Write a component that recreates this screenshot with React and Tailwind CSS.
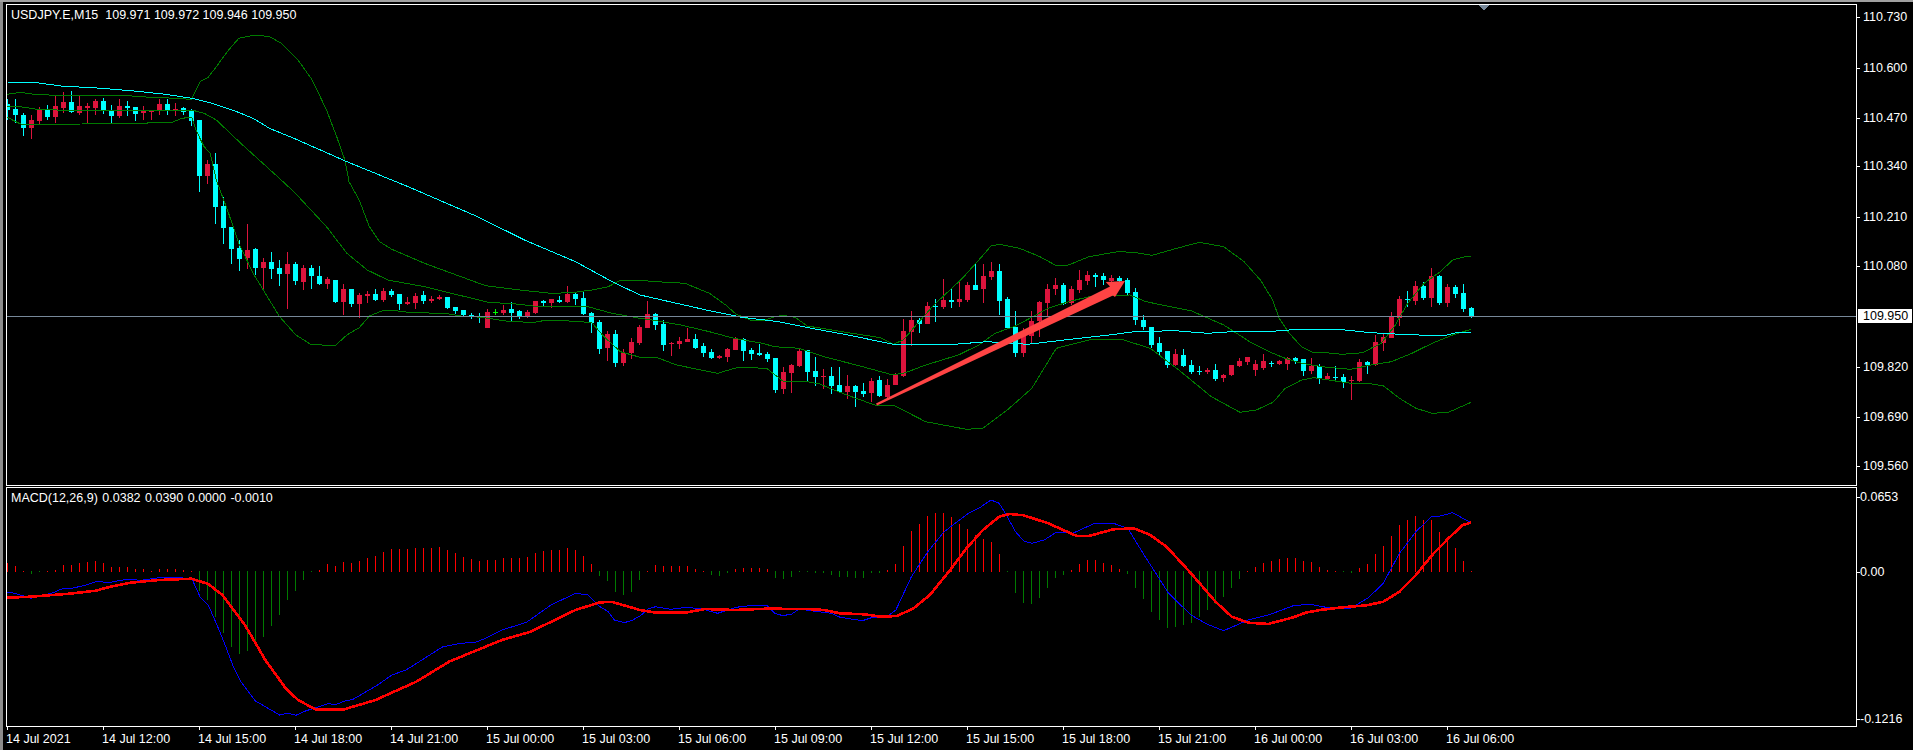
// MT4 style chart: USDJPY.E M15 with bollinger bands, MA and MACD.
// Numbers below are read off the screenshot: x is stretched 2.45 times and y 3 times.
const CANDLES = [
  [0,312,330,298,360],[0,327,345,297,368],[0,345,383,340,408],[1,360,383,345,417],[1,328,363,322,372],[0,327,352,315,360],
  [1,318,351,288,368],[1,306,323,276,340],[0,306,336,273,338],[1,318,340,287,345],[1,318,323,310,368],[1,303,324,297,345],
  [0,303,333,294,342],[0,330,348,315,372],[1,318,348,297,354],[0,318,323,303,348],[0,321,342,320,363],[1,333,339,318,360],
  [1,330,335,330,360],[1,312,333,297,345],[0,312,333,297,345],[1,327,332,309,348],[0,324,336,321,345],[0,330,362,327,378],
  [0,360,528,360,576],[1,492,528,480,552],[0,492,621,459,672],[0,618,684,591,732],[0,681,747,681,792],[0,744,777,720,813],
  [1,750,774,672,807],[0,747,804,743,825],
  [1,786,804,774,870],[0,786,807,756,837],[0,804,822,780,858],[1,792,822,756,927],[0,792,843,786,855],[1,804,846,795,870],
  [0,804,828,795,867],[0,828,852,798,855],[1,837,852,831,867],[0,840,906,840,909],[1,867,906,852,945],[0,867,912,867,921],
  [1,885,912,879,954],[1,882,888,873,909],[0,882,900,867,903],[1,873,900,864,906],[0,873,885,867,891],[0,882,912,882,930],
  [1,906,912,891,915],[1,888,909,879,927],[0,885,903,873,912],[1,897,903,888,909],[1,891,897,885,900],[0,891,924,891,927],
  [0,921,933,921,942],[0,930,945,930,951],[0,945,951,939,957],[0,948,953,939,969],[1,936,984,927,984],[2,936,938,927,945],
  [1,930,939,915,945],[0,927,939,906,966],[0,933,951,930,957],[1,936,951,930,954],[1,903,939,903,942],[0,903,909,900,918],
  [1,897,909,897,924],[0,900,906,888,909],[1,882,906,858,909],[0,882,897,876,915],[0,894,942,873,945],[0,939,969,936,999],
  [0,966,1047,960,1062],[1,1002,1044,993,1083],[0,1002,1089,990,1101],[1,1059,1089,1047,1098],[1,1026,1059,1014,1077],[1,981,1029,975,1035],
  [1,942,984,903,985],[0,942,975,939,990],[0,972,1035,960,1053],[1,1029,1032,1026,1068],[1,1023,1032,1011,1047],[1,1017,1026,984,1026],
  [0,1017,1044,1002,1047],[0,1038,1059,1029,1071],[0,1056,1074,1047,1077],[1,1068,1074,1065,1077],[1,1047,1071,1044,1086],[1,1014,1050,1011,1050],
  [0,1017,1053,1014,1083],[0,1050,1062,1044,1080],[0,1059,1065,1032,1068],[0,1062,1077,1056,1086],[0,1074,1170,1074,1179],[1,1116,1167,1101,1182],
  [1,1095,1119,1092,1179],[1,1053,1098,1047,1101],[0,1050,1116,1050,1146],[0,1113,1131,1071,1158],[1,1128,1131,1107,1167],[0,1128,1158,1101,1182],
  [0,1155,1176,1101,1179],[1,1158,1176,1125,1197],[0,1158,1176,1155,1221],[0,1173,1182,1149,1191],[1,1143,1179,1134,1207],[0,1140,1188,1128,1191],
  [1,1155,1191,1137,1194],[1,1125,1155,1119,1155],[1,993,1128,957,1131],[1,960,996,933,1038],[0,960,972,954,999],[1,918,972,906,972],
  [0,918,921,897,966],[1,900,921,837,927],[0,900,906,864,924],[1,897,906,843,921],[1,855,900,846,906],[0,855,870,789,870],
  [1,828,867,792,909],[1,813,831,786,840],[0,813,903,792,945],[0,897,984,891,987],[0,981,1059,933,1071],[1,1005,1059,984,1071],
  [1,963,1008,933,1029],[1,906,963,903,1011],[1,867,909,852,951],[1,855,867,834,885],[0,855,912,849,915],[1,867,909,858,915],
  [1,840,870,810,879],[1,825,843,813,855],[0,825,831,819,861],[0,828,840,819,855],[1,834,843,825,846],[0,834,843,828,846],
  [0,840,879,834,885],[0,876,960,864,975],[0,960,981,945,990],[0,981,1035,981,1044],[0,1029,1056,1011,1065],[0,1053,1095,1053,1104],
  [1,1062,1095,1047,1098],[0,1065,1098,1047,1101],[0,1095,1116,1080,1122],[0,1113,1116,1098,1125],[1,1110,1116,1104,1122],[0,1110,1137,1092,1143],
  [1,1125,1134,1122,1146],[1,1095,1125,1095,1128],[1,1083,1098,1074,1101],[1,1071,1086,1071,1095],[1,1092,1110,1080,1128],[1,1083,1104,1062,1110],
  [0,1089,1092,1083,1101],[1,1083,1092,1080,1095],[1,1074,1092,1071,1110],[0,1074,1083,1071,1092],[0,1077,1113,1077,1128],[1,1098,1113,1074,1122],
  [0,1098,1137,1092,1152],[1,1128,1137,1119,1137],[0,1131,1133,1098,1143],[0,1131,1146,1122,1164],[1,1140,1143,1128,1200],[1,1086,1143,1077,1146],
  [0,1086,1095,1083,1122],[1,1026,1095,1005,1098],[1,1011,1029,1002,1053],[1,951,1014,936,1014],[1,897,954,888,978],[0,897,899,873,921],
  [1,858,903,843,915],[0,858,894,846,900],[1,828,894,804,921],[0,828,909,825,915],[1,861,909,852,921],[0,861,882,855,894],
  [0,879,927,852,936],[0,924,951,921,954],
]

// top of each MACD bar (or bottom when it hangs under the zero line)
const MACD_BARS = [
  250,258,272,281,275,273,270,255,255,250,247,243,249,261,261,261,267,267,272,267,267,267,270,273,
  333,360,411,459,501,522,513,498,471,438,405,360,333,300,276,270,252,258,246,249,243,234,228,216,
  207,207,208,204,204,204,201,210,219,231,237,243,240,240,234,233,234,231,219,213,210,210,204,210,
  228,252,288,303,336,345,336,300,273,255,258,258,258,258,267,273,285,288,279,267,264,264,264,267,
  294,297,291,275,276,278,278,285,291,291,294,294,279,279,270,252,198,153,132,108,99,99,111,132,
  147,165,177,186,222,276,339,369,372,354,324,294,285,270,252,240,240,249,255,267,282,324,357,396,
  420,444,441,435,429,411,390,372,351,324,297,273,261,249,243,237,234,234,243,246,261,270,273,275,
  278,264,252,222,198,168,135,120,108,120,120,156,177,204,243,274,
]

const BB_UPPER = [
  [0, 0, [[18,283],[50,277],[90,284],[120,285],[300,285],[340,290],[400,293],[469,298],[478,275],[490,245],[510,232],[530,200],[560,150],[585,115],[625,105],[660,110],[690,130],[730,180],[765,240],[800,330],[825,410],[845,480],[855,545],[880,600],[905,680]]],
  [0, 240, [[930,5],[960,28],[1040,70],[1100,97],[1190,137],[1280,151],[1350,160],[1400,158],[1450,150],[1490,140],[1520,121],[1568,121]]],
  [640, 240, [[40,125],[110,130],[170,160],[210,195],[235,222],[270,240],[300,242],[330,230],[350,226],[380,232],[410,258],[470,270],[520,280],[590,293],[620,313],[645,300],[680,250],[720,195],[790,115],[830,60],[860,18],[880,13],[930,25],[980,50],[1020,77],[1050,75],[1100,50],[1170,35],[1210,37],[1255,46],[1300,30],[1370,7],[1430,20],[1480,65],[1520,120],[1550,180]]],
  [1273, 240, [[15,235],[40,280],[70,320],[100,338],[130,338],[170,343],[220,338],[240,325],[265,310],[300,255],[330,190],[370,130],[410,95],[440,60],[470,50],[485,48]]],
]
const BB_MID = [
  [0, 0, [[18,320],[50,320],[90,328],[140,330],[470,330],[500,340],[530,360],[590,430],[680,530],[720,575],[800,680]]],
  [0, 240, [[825,0],[850,40],[900,90],[950,120],[1040,140],[1100,158],[1200,188],[1250,190],[1320,200],[1440,200],[1500,220],[1568,235]]],
  [640, 240, [[40,242],[100,255],[170,275],[230,295],[300,310],[330,320],[390,325],[450,350],[530,375],[620,405],[650,398],[700,375],[780,345],[830,315],[870,280],[920,258],[1000,205],[1050,185],[1100,170],[1200,165],[1240,185],[1300,200],[1350,212],[1430,255],[1500,310]]],
  [1273, 240, [[0,340],[30,355],[70,370],[120,380],[190,388],[240,375],[290,365],[340,340],[390,310],[440,285],[485,268]]],
]
const BB_LOWER = [
  [0, 0, [[18,352],[50,372],[100,373],[200,372],[270,370],[350,370],[400,366],[420,368],[445,355],[470,352],[480,390],[500,440],[515,460],[530,540],[560,640],[585,730]]],
  [0, 240, [[620,100],[650,160],[685,230],[725,285],[760,312],[820,318],[850,285],[880,263],[905,228],[940,211],[975,213],[1010,218],[1090,220],[1130,228],[1180,232],[1250,245],[1310,247],[1340,240],[1410,244],[1450,248],[1480,290],[1520,335],[1568,352]]],
  [640, 240, [[40,352],[90,375],[150,390],[190,400],[240,382],[310,385],[350,423],[400,423],[440,432],[500,462],[580,497],[620,495],[700,545],[800,568],[840,565],[900,510],[960,445],[1020,325],[1100,300],[1180,298],[1250,325],[1320,390],[1400,470],[1470,517],[1510,510]]],
  [1273, 240, [[0,487],[30,445],[70,420],[100,413],[190,430],[230,430],[270,437],[310,475],[350,505],[390,520],[430,517],[485,487]]],
]
const MA = [
  [0, 0, [[18,246],[90,248],[150,258],[250,265],[320,272],[400,282],[470,295],[520,310],[580,335],[620,355],[660,385],[720,415],[850,485],[1000,560],[1170,650]]],
  [0, 240, [[1285,0],[1410,65],[1500,125],[1568,165]]],
  [640, 240, [[90,190],[170,212],[250,232],[340,245],[420,265],[510,285],[620,313],[770,313],[850,305],[950,313],[1040,300],[1150,285],[1210,275],[1310,272],[1390,280],[1450,275],[1550,274]]],
  [1273, 240, [[60,268],[160,268],[240,278],[330,284],[420,287],[450,278],[485,276]]],
]
const MACD_LINE = [
  [0, 480, [[18,337],[30,338],[50,345],[75,355],[100,348],[130,338],[155,325],[180,324],[210,315],[235,305],[270,307],[310,298],[345,301],[390,293],[440,293],[470,296],[490,350],[510,375],[530,430],[550,490],[570,555],[590,605],[625,662],[650,680],[685,705],[705,700],[725,706],[750,692],[775,683],[805,670],[820,675],[845,663],[865,658],[925,615],[960,585],[995,570],[1040,535],[1085,500],[1130,490],[1165,487],[1190,475],[1230,450],[1290,427],[1350,375],[1410,340],[1440,345],[1470,380],[1490,395],[1505,420],[1530,428],[1550,420],[1568,408]]],
  [640, 480, [[20,387],[38,380],[75,388],[115,382],[155,388],[190,400],[235,382],[270,377],[312,377],[330,400],[350,407],[372,402],[390,387],[430,394],[470,400],[490,412],[545,422],[570,412],[605,410],[627,390],[665,290],[705,215],[745,155],[805,100],[830,85],[860,60],[880,70],[900,110],[920,155],[940,183],[960,190],[990,180],[1020,157],[1060,160],[1110,132],[1160,130],[1195,145],[1235,225],[1295,340],[1350,405],[1390,433],[1430,452],[1490,420],[1530,408]]],
  [1273, 480, [[0,400],[50,377],[90,373],[130,382],[190,385],[235,352],[270,310],[310,220],[350,155],[388,110],[410,108],[440,98],[485,128]]],
]
const SIGNAL_LINE = [
  [0, 480, [[18,353],[75,350],[170,341],[235,332],[270,320],[320,308],[390,300],[470,296],[510,312],[545,345],[600,435],[650,540],[700,625],[730,660],[775,689],[840,689],[920,660],[1020,605],[1100,545],[1150,520],[1230,480],[1300,455],[1410,390],[1470,367],[1500,366],[1568,390]]],
  [640, 480, [[40,398],[110,398],[160,387],[230,390],[310,386],[410,387],[450,390],[490,400],[550,403],[590,410],[630,408],[670,385],[710,345],[760,270],[800,205],[840,150],[880,110],[905,102],[940,106],[1000,130],[1070,168],[1100,168],[1160,148],[1210,145],[1250,165],[1290,200],[1350,280],[1410,365],[1450,410],[1490,428],[1540,432]]],
  [1273, 480, [[0,428],[50,412],[80,398],[115,390],[170,382],[230,376],[270,365],[310,335],[350,285],[390,225],[430,175],[465,135],[485,128]]],
]

const PRICES = [
  ['110.730', 17], ['110.600', 68], ['110.470', 118], ['110.340', 166], ['110.210', 217],
  ['110.080', 266], ['109.820', 367], ['109.690', 417], ['109.560', 466],
]
const MACD_SCALE = [['0.0653', 497], ['0.00', 572], ['-0.1216', 719]]
const TIMES = [
  '14 Jul 2021', '14 Jul 12:00', '14 Jul 15:00', '14 Jul 18:00', '14 Jul 21:00', '15 Jul 00:00', '15 Jul 03:00', '15 Jul 06:00',
  '15 Jul 09:00', '15 Jul 12:00', '15 Jul 15:00', '15 Jul 18:00', '15 Jul 21:00', '16 Jul 00:00', '16 Jul 03:00', '16 Jul 06:00',
]

const toPoints = (parts) =>
  parts
    .flatMap(([ox, oy, pts]) => pts.map(([x, y]) => `${(x / 2.45 + ox).toFixed(1)},${(y / 3 + oy).toFixed(1)}`))
    .join(' ')

function Candle({ candle, index }) {
  const [kind, top, bottom, wickTop, wickBottom] = candle
  const x = 7 + index * 8
  const y1 = Math.round(top / 3)
  const y2 = Math.round(bottom / 3)
  const w1 = Math.round(wickTop / 3)
  const w2 = Math.round(wickBottom / 3)
  const fill = kind === 0 ? '#00ffff' : kind === 1 ? '#dc143c' : '#00ff00'
  return (
    <g fill={fill}>
      <rect x={x} y={w1} width="1" height={Math.max(1, w2 - w1)} />
      <rect x={x - 2} y={y1} width="5" height={Math.max(1, y2 - y1)} />
    </g>
  )
}

function MacdBar({ value, index }) {
  const x = 7 + index * 8
  const y = Math.round(value / 3) + 480
  const zero = 572
  if (y < zero) return <rect x={x} y={y} width="1" height={zero - y} fill="#ff0000" />
  return <rect x={x} y={zero - 1} width="1" height={Math.max(1, y - zero + 1)} fill="#007a00" />
}

function AxisLabel({ text, y, top, className }) {
  return (
    <div className="absolute left-0 right-0 flex items-center" style={{ top: y - top - 8 }}>
      <span className="w-1 h-px bg-white" />
      <span className={`leading-4 text-white ${className}`}>{text}</span>
    </div>
  )
}

export default function App() {
  return (
    <div className="w-[1913px] h-[750px] overflow-hidden bg-black text-[12.5px] text-white font-['Liberation_Sans',sans-serif]">
      <div className="h-[2px] bg-[#a0a0a0]" />
      <div className="flex h-[748px]">
        <div className="w-[3px] bg-[#8c8c8c]" />
        <div className="ml-[3px] pt-[2px] flex-1 min-w-0">
          {/* price pane */}
          <div className="flex h-[482px]">
            <div className="relative w-[1851px] border border-white">
              <svg viewBox="7 5 1849 480" className="block w-[1849px] h-[480px]" shapeRendering="crispEdges">
                {CANDLES.map((c, i) => <Candle key={i} candle={c} index={i} />)}
                <polyline points={toPoints(BB_UPPER)} fill="none" stroke="#007a00" />
                <polyline points={toPoints(BB_MID)} fill="none" stroke="#007a00" />
                <polyline points={toPoints(BB_LOWER)} fill="none" stroke="#007a00" />
                <polyline points={toPoints(MA)} fill="none" stroke="#00ffff" />
                <rect x="7" y="316" width="1849" height="1" fill="#778899" />
                <polygon points="1479,5 1489,5 1484,11" fill="#778899" />
                <polygon points="876,403.5 1110,286.5 1105.7,282 1125,281 1115,297 1113,295.5 877,405.5" fill="#ff4444" shapeRendering="auto" />
              </svg>
              <div className="absolute left-1 top-[2px] leading-4 whitespace-pre">USDJPY.E,M15  109.971 109.972 109.946 109.950</div>
            </div>
            <div className="relative w-[56px] -ml-px">
              {PRICES.map(([text, y]) => <AxisLabel key={text} text={text} y={y} top={4} className="ml-[3px]" />)}
              <div className="absolute left-[2px] right-0 top-[305px] h-[14px] bg-white text-black flex items-center pl-[5px]">109.950</div>
            </div>
          </div>

          {/* macd pane */}
          <div className="flex h-[240px] mt-px">
            <div className="relative w-[1851px] border border-white">
              <svg viewBox="7 488 1849 238" className="block w-[1849px] h-[238px]" shapeRendering="crispEdges">
                {MACD_BARS.map((v, i) => <MacdBar key={i} value={v} index={i} />)}
                <polyline points={toPoints(MACD_LINE)} fill="none" stroke="#0000ff" />
                <polyline points={toPoints(SIGNAL_LINE)} fill="none" stroke="#ff0000" strokeWidth="2.6" />
              </svg>
              <div className="absolute left-1 top-[2px] leading-4 whitespace-pre [word-spacing:1px]">MACD(12,26,9) 0.0382 0.0390 0.0000 -0.0010</div>
            </div>
            <div className="relative w-[56px] -ml-px">
              {MACD_SCALE.map(([text, y]) => <AxisLabel key={text} text={text} y={y} top={487} className="" />)}
            </div>
          </div>

          {/* time axis */}
          <div className="flex pl-px">
            {TIMES.map((t) => (
              <div key={t} className="w-[96px] shrink-0">
                <div className="w-px h-[3px] bg-white" />
                <div className="leading-4 whitespace-nowrap -ml-px mt-px">{t}</div>
              </div>
            ))}
          </div>
        </div>
      </div>
    </div>
  )
}
